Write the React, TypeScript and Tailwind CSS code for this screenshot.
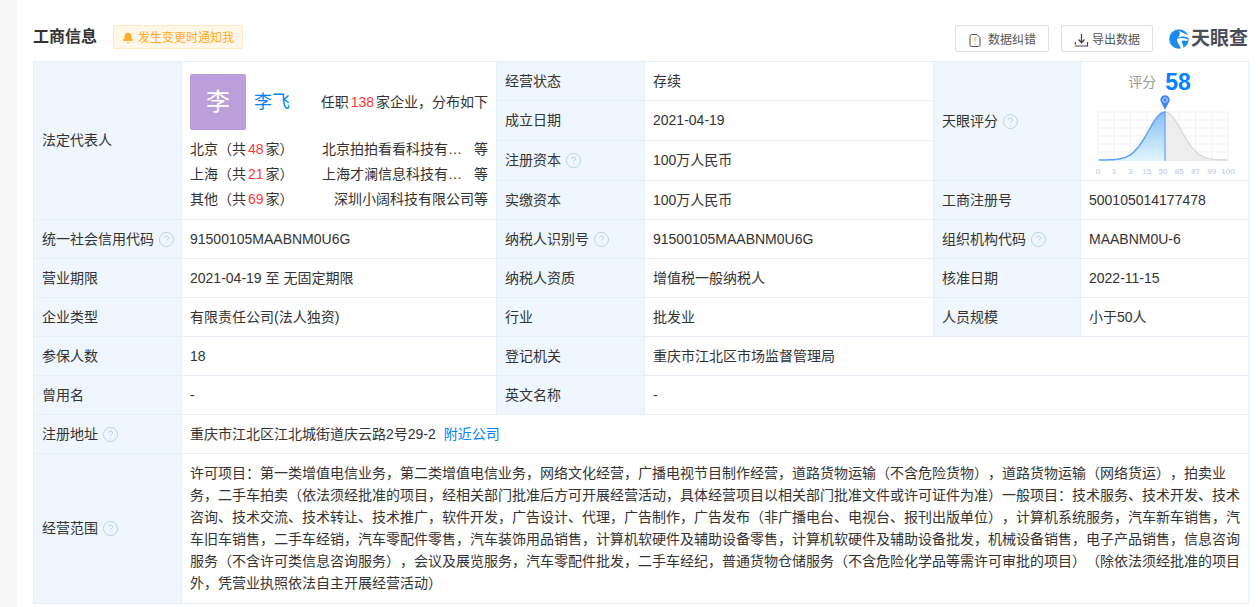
import React from "react";
import { Bell, CircleHelp } from "lucide-react";

const Help = () => (
  <CircleHelp size={17} strokeWidth={1.4} className="ml-[4px] inline-block align-[-4px] text-[#b5d2ee]" />
);

const Label = ({ children, help, rowSpan }: { children: React.ReactNode; help?: boolean; rowSpan?: number }) => (
  <td rowSpan={rowSpan} className="border border-[#e6eff8] bg-[#eff6fd] px-2 whitespace-nowrap text-[#333]">
    {children}
    {help && <Help />}
  </td>
);

const Value = ({ children, colSpan }: { children: React.ReactNode; colSpan?: number }) => (
  <td colSpan={colSpan} className="border border-[#e6eff8] px-2 text-[#333]">
    {children}
  </td>
);

const Red = ({ children }: { children: React.ReactNode }) => (
  <span className="mx-[2px] text-[#ff3b3b]">{children}</span>
);

const Region = ({ city, count, company }: { city: string; count: number; company: React.ReactNode }) => (
  <div className="flex h-[25px] items-center justify-between">
    <span>
      {city}（共<Red>{count}</Red>家）
    </span>
    {company}
  </div>
);

const curveY = (x: number) => 66 - 48 * Math.exp(-((x - 74) ** 2) / (2 * 16.5 * 16.5));

const curve = (from: number, to: number) => {
  const pts: string[] = [];
  for (let x = from; x <= to; x += 2) pts.push(`${x} ${curveY(x).toFixed(1)}`);
  return "M" + pts.join(" L");
};

const Chart = () => {
  const ticks = ["0", "1", "3", "15", "50", "85", "97", "99", "100"];
  return (
    <svg width="150" height="84" viewBox="0 0 150 84" className="block">
      <defs>
        <linearGradient id="area" x1="0" y1="0" x2="0" y2="1">
          <stop offset="0" stopColor="#86bff7" />
          <stop offset="1" stopColor="#e2f5fc" />
        </linearGradient>
      </defs>
      {ticks.map((t, i) => (
        <path key={t} d={`M${7 + i * 16.25} 18 V67`} stroke="#f1f1f4" />
      ))}
      {[18, 26, 34, 42, 50, 58, 66].map((y) => (
        <path key={y} d={`M7 ${y} H137`} stroke="#f1f1f4" />
      ))}
      <path d={`${curve(8, 74)} L74 67 L8 67 Z`} fill="url(#area)" />
      <path d={`${curve(74, 136)} L136 67 L74 67 Z`} fill="#ededed" />
      <path d={curve(74, 136)} fill="none" stroke="#d8d8d8" strokeWidth="1.3" />
      <path d={curve(8, 74)} fill="none" stroke="#5b9ef8" strokeWidth="1.5" />
      <path d="M74 17 V67" stroke="#6ea6f8" strokeWidth="1.3" />
      <path d="M74 16 L70 8 A4.6 4.6 0 1 1 78 8 Z" fill="#3f83ee" />
      <circle cx="74" cy="6" r="2.3" fill="none" stroke="#cfe2fb" />
      {ticks.map((t, i) => (
        <text key={t} x={7 + i * 16.25} y="80" textAnchor="middle" fontSize="8" fill="#b6c7de">
          {t}
        </text>
      ))}
    </svg>
  );
};

const Logo = () => (
  <div className="flex items-center">
    <svg width="20" height="20" viewBox="0 0 20 20" className="mr-[2px]">
      <circle cx="10" cy="10" r="9.8" fill="#1c8cf0" />
      <path d="M9 1 C13 4 18 5 20 7 L20 9 C16 7 12 7 9 9 C12 5 11 3 9 1 Z" fill="#fff" />
      <path d="M8 10 C12 8 16 9 20 11 L17 12 C13 11 12 12 13 14 C14 16 15 18 14 20 L12 20 C11 16 8 14 8 10 Z" fill="#fff" />
    </svg>
    <span className="text-[19px] leading-none font-bold text-[#4a4f57]">天眼查</span>
  </div>
);

const FileIcon = () => (
  <svg width="14" height="15" viewBox="0 0 14 15" fill="none" className="mr-[6px]">
    <path d="M4 1.5 H9 L12 4.5 V12 A1.5 1.5 0 0 1 10.5 13.5 H3.5 A1.5 1.5 0 0 1 2 12 V3.5 A2 2 0 0 1 4 1.5 Z" stroke="#555" />
    <path d="M7 4 V8.5 M7 10 V11" stroke="#e8a33d" />
  </svg>
);

const ExportIcon = () => (
  <svg width="15" height="15" viewBox="0 0 15 15" fill="none" className="mr-[3px]">
    <path d="M7.5 1 V9.5 M4.5 6.5 L7.5 9.7 L10.5 6.5" stroke="#444" strokeWidth="1.3" />
    <path d="M1.5 9 V13 H13.5 V9" stroke="#444" strokeWidth="1.2" />
    <path d="M1.5 11 V13 H4" stroke="#e8a33d" strokeWidth="1.2" />
  </svg>
);

export default function App() {
  return (
    <div className="flex h-[607px] overflow-hidden bg-white font-['Liberation_Sans','Noto_Sans_CJK_SC',sans-serif] text-[14px] text-[#333] [text-spacing-trim:space-all]">
      <div className="w-[17px] shrink-0 bg-[#f6f6f6]" />
      <div className="w-[1231px] shrink-0 pl-4">
        <div className="flex h-[61px] items-start justify-between pt-[25px]">
          <div className="flex items-center">
            <h2 className="-mt-[1px] text-[16px] leading-6 font-bold text-[#333]">工商信息</h2>
            <div className="ml-4 flex h-6 w-[130px] items-center rounded-[2px] border border-[#ffe9c4] bg-[#fff7e8] pt-[1px] pl-2 text-[12px] text-[#ffa929]">
              <Bell size={12} fill="#ffa929" strokeWidth={1.5} className="mr-[4px]" />
              发生变更时通知我
            </div>
          </div>
          <div className="flex items-center">
            <button className="flex h-[27px] w-[94px] items-center justify-center rounded-[2px] border border-[#e0e0e0] pt-[3px] text-[12px] text-[#555]">
              <FileIcon />
              数据纠错
            </button>
            <button className="ml-3 flex h-[27px] w-[92px] items-center justify-center rounded-[2px] border border-[#e0e0e0] pt-[3px] text-[12px] text-[#555]">
              <ExportIcon />
              导出数据
            </button>
            <div className="ml-4">
              <Logo />
            </div>
          </div>
        </div>
        <table className="w-[1215px] table-fixed border-collapse">
          <colgroup>
            <col className="w-[148px]" />
            <col className="w-[315px]" />
            <col className="w-[148px]" />
            <col className="w-[289px]" />
            <col className="w-[147px]" />
            <col className="w-[168px]" />
          </colgroup>
          <tbody>
            <tr className="h-[39px]">
              <Label rowSpan={4}>法定代表人</Label>
              <td rowSpan={4} className="border border-[#e6eff8] px-2 align-top">
                <div className="flex items-center pt-3">
                  <div className="flex h-14 w-14 items-center justify-center rounded-[2px] bg-[#bb9fdb] text-[24px] text-white">
                    李
                  </div>
                  <span className="ml-2 text-[18px] text-[#0084ff]">李飞</span>
                  <span className="ml-auto">
                    任职<Red>138</Red>家企业，分布如下
                  </span>
                </div>
                <div className="mt-[7px]">
                  <Region
                    city="北京"
                    count={48}
                    company={
                      <span className="flex">
                        <span className="w-[140px] whitespace-nowrap">北京拍拍看看科技有…</span>
                        <span className="ml-[12px]">等</span>
                      </span>
                    }
                  />
                  <Region
                    city="上海"
                    count={21}
                    company={
                      <span className="flex">
                        <span className="w-[140px] whitespace-nowrap">上海才澜信息科技有…</span>
                        <span className="ml-[12px]">等</span>
                      </span>
                    }
                  />
                  <Region city="其他" count={69} company={<span>深圳小阔科技有限公司等</span>} />
                </div>
              </td>
              <Label>经营状态</Label>
              <Value>存续</Value>
              <Label rowSpan={3} help>
                天眼评分
              </Label>
              <td rowSpan={3} className="border border-[#e6eff8] align-top">
                <div className="flex items-center justify-center pt-2 pr-[10px] text-[#999]">
                  评分
                  <span className="ml-[9px] text-[23px] leading-6 font-bold text-[#0084ff]">58</span>
                </div>
                <div className="ml-[10px]">
                  <Chart />
                </div>
              </td>
            </tr>
            <tr className="h-10">
              <Label>成立日期</Label>
              <Value>2021-04-19</Value>
            </tr>
            <tr className="h-10">
              <Label help>注册资本</Label>
              <Value>100万人民币</Value>
            </tr>
            <tr className="h-[39px]">
              <Label>实缴资本</Label>
              <Value>100万人民币</Value>
              <Label>工商注册号</Label>
              <Value>500105014177478</Value>
            </tr>
            <tr className="h-[39px]">
              <Label help>统一社会信用代码</Label>
              <Value>91500105MAABNM0U6G</Value>
              <Label help>纳税人识别号</Label>
              <Value>91500105MAABNM0U6G</Value>
              <Label help>组织机构代码</Label>
              <Value>MAABNM0U-6</Value>
            </tr>
            <tr className="h-[39px]">
              <Label>营业期限</Label>
              <Value>2021-04-19 至 无固定期限</Value>
              <Label>纳税人资质</Label>
              <Value>增值税一般纳税人</Value>
              <Label>核准日期</Label>
              <Value>2022-11-15</Value>
            </tr>
            <tr className="h-[39px]">
              <Label>企业类型</Label>
              <Value>有限责任公司(法人独资)</Value>
              <Label>行业</Label>
              <Value>批发业</Value>
              <Label>人员规模</Label>
              <Value>小于50人</Value>
            </tr>
            <tr className="h-[39px]">
              <Label>参保人数</Label>
              <Value>18</Value>
              <Label>登记机关</Label>
              <Value colSpan={3}>重庆市江北区市场监督管理局</Value>
            </tr>
            <tr className="h-[39px]">
              <Label>曾用名</Label>
              <Value>-</Value>
              <Label>英文名称</Label>
              <Value colSpan={3}>-</Value>
            </tr>
            <tr className="h-[39px]">
              <Label help>注册地址</Label>
              <Value colSpan={5}>
                重庆市江北区江北城街道庆云路2号29-2
                <span className="ml-2 text-[#0084ff]">附近公司</span>
              </Value>
            </tr>
            <tr className="h-[150px]">
              <Label help>经营范围</Label>
              <td colSpan={5} className="border border-[#e6eff8] px-2 pb-[2px] leading-[22px] text-[#333]">
                许可项目：第一类增值电信业务，第二类增值电信业务，网络文化经营，广播电视节目制作经营，道路货物运输（不含危险货物），道路货物运输（网络货运），拍卖业务，二手车拍卖（依法须经批准的项目，经相关部门批准后方可开展经营活动，具体经营项目以相关部门批准文件或许可证件为准）一般项目：技术服务、技术开发、技术咨询、技术交流、技术转让、技术推广，软件开发，广告设计、代理，广告制作，广告发布（非广播电台、电视台、报刊出版单位），计算机系统服务，汽车新车销售，汽车旧车销售，二手车经销，汽车零配件零售，汽车装饰用品销售，计算机软硬件及辅助设备零售，计算机软硬件及辅助设备批发，机械设备销售，电子产品销售，信息咨询服务（不含许可类信息咨询服务），会议及展览服务，汽车零配件批发，二手车经纪，普通货物仓储服务（不含危险化学品等需许可审批的项目）（除依法须经批准的项目外，凭营业执照依法自主开展经营活动）
              </td>
            </tr>
          </tbody>
        </table>
      </div>
    </div>
  );
}
